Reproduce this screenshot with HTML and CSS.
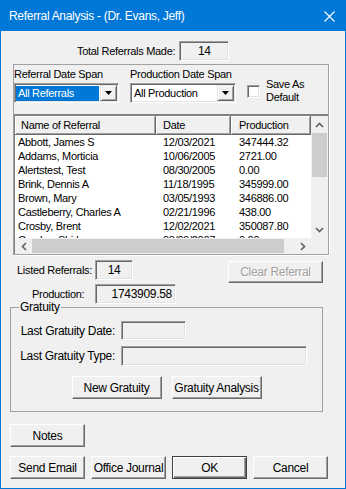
FILE: index.html
```html
<!DOCTYPE html>
<html lang="en">
<head>
  <meta charset="UTF-8">
  <title>Referral Analysis</title>
  <link rel="stylesheet" href="styles.css">
</head>
<body>

<div class="window">
  <div class="titlebar">
    <span>Referral Analysis - (Dr. Evans, Jeff)</span>
    <svg class="close" width="11" height="11" viewBox="0 0 11 11">
      <path d="M0.5 0.5 L10.5 10.5 M10.5 0.5 L0.5 10.5" stroke="#fff" stroke-width="1.1" fill="none"/>
    </svg>
  </div>

  <div class="content">
    <div class="total-row">
      <span>Total Referrals Made:</span>
      <div class="field total">14</div>
    </div>

    <div class="panel">
      <div class="spans">
        <div class="span-col">
          <div class="span-label">Referral Date Span</div>
          <div class="combo">
            <div class="combo-text selected">All Referrals</div>
            <div class="combo-btn">
              <svg width="7" height="4" viewBox="0 0 7 4"><path d="M0 0 H7 L3.5 4 Z" fill="#000"/></svg>
            </div>
          </div>
        </div>
        <div class="span-col wide">
          <div class="span-label">Production Date Span</div>
          <div class="combo">
            <div class="combo-text">All Production</div>
            <div class="combo-btn">
              <svg width="7" height="4" viewBox="0 0 7 4"><path d="M0 0 H7 L3.5 4 Z" fill="#000"/></svg>
            </div>
          </div>
        </div>
        <div class="save">
          <div class="checkbox"></div>
          <div class="save-label">Save As<br>Default</div>
        </div>
      </div>

      <div class="list">
        <div class="list-body">
          <div class="list-main">
            <div class="list-head">
              <div class="c-name">Name of Referral</div>
              <div class="c-date">Date</div>
              <div class="c-prod">Production</div>
            </div>
            <div class="list-rows">
              <div class="row"><div class="c-name">Abbott, James S</div><div class="c-date">12/03/2021</div><div class="c-prod">347444.32</div></div>
              <div class="row"><div class="c-name">Addams, Morticia</div><div class="c-date">10/06/2005</div><div class="c-prod">2721.00</div></div>
              <div class="row"><div class="c-name">Alertstest, Test</div><div class="c-date">08/30/2005</div><div class="c-prod">0.00</div></div>
              <div class="row"><div class="c-name">Brink, Dennis A</div><div class="c-date">11/18/1995</div><div class="c-prod">345999.00</div></div>
              <div class="row"><div class="c-name">Brown, Mary</div><div class="c-date">03/05/1993</div><div class="c-prod">346886.00</div></div>
              <div class="row"><div class="c-name">Castleberry, Charles A</div><div class="c-date">02/21/1996</div><div class="c-prod">438.00</div></div>
              <div class="row"><div class="c-name">Crosby, Brent</div><div class="c-date">12/02/2021</div><div class="c-prod">350087.80</div></div>
              <div class="row"><div class="c-name">Crosley, Shirley</div><div class="c-date">08/09/2007</div><div class="c-prod">0.00</div></div>
            </div>
          </div>
          <div class="vscroll">
            <div class="sb-btn">
              <svg width="9" height="6" viewBox="0 0 9 6"><path d="M1 5 L4.5 1.5 L8 5" stroke="#606060" stroke-width="1.6" fill="none"/></svg>
            </div>
            <div class="vthumb"></div>
            <div class="sb-space"></div>
            <div class="sb-btn">
              <svg width="9" height="6" viewBox="0 0 9 6"><path d="M1 1 L4.5 4.5 L8 1" stroke="#606060" stroke-width="1.6" fill="none"/></svg>
            </div>
          </div>
        </div>
        <div class="hscroll-row">
          <div class="hscroll">
            <div class="sb-btn h">
              <svg width="6" height="9" viewBox="0 0 6 9"><path d="M5 1 L1.5 4.5 L5 8" stroke="#606060" stroke-width="1.6" fill="none"/></svg>
            </div>
            <div class="hthumb"></div>
            <div class="sb-space"></div>
            <div class="sb-btn h">
              <svg width="6" height="9" viewBox="0 0 6 9"><path d="M1 1 L4.5 4.5 L1 8" stroke="#606060" stroke-width="1.6" fill="none"/></svg>
            </div>
          </div>
          <div class="corner"></div>
        </div>
      </div>
    </div>

    <div class="listed-row">
      <div class="row-label">Listed Referrals:</div>
      <div class="field listed">14</div>
      <button class="btn clear" disabled>Clear Referral</button>
    </div>

    <div class="prod-row">
      <div class="row-label prod">Production:</div>
      <div class="field prod-value">1743909.58</div>
    </div>

    <fieldset class="gratuity">
      <legend>Gratuity</legend>
      <div class="g-row first">
        <div class="g-label">Last Gratuity Date:</div>
        <div class="field g-date"></div>
      </div>
      <div class="g-row">
        <div class="g-label">Last Gratuity Type:</div>
        <div class="field g-type"></div>
      </div>
      <div class="g-buttons">
        <button class="btn g-btn">New Gratuity</button>
        <button class="btn g-btn">Gratuity Analysis</button>
      </div>
    </fieldset>

    <div class="notes-row">
      <button class="btn">Notes</button>
    </div>

    <div class="bottom-row">
      <button class="btn">Send Email</button>
      <button class="btn">Office Journal</button>
      <button class="btn default">OK</button>
      <button class="btn">Cancel</button>
    </div>
  </div>
</div>

</body>
</html>
```

FILE: styles.css
```css
body {
  margin: 0;
  font-family: "Liberation Sans", Arial, sans-serif;
  font-size: 11px;
  letter-spacing: -0.3px;
  color: #000;
  background: #f0f0f0;
}

.window {
  width: 346px;
  height: 489px;
  box-sizing: border-box;
  border: 1px solid #0078d7;
  border-top: 0;
  background: #f0f0f0;
}

.titlebar {
  height: 31px;
  background: #0078d7;
  color: #fff;
  font-size: 12px;
  display: flex;
  align-items: center;
  justify-content: space-between;
  padding: 0 10px 0 8px;
}

.close {
  margin-top: 1px;
}

.content {
  padding: 10px 16px 0 9px;
}

/* sunken read-only boxes */
.field {
  box-sizing: border-box;
  height: 20px;
  border: 1px solid;
  border-color: #a0a0a0 #fff #fff #a0a0a0;
  box-shadow: inset 1px 1px #696969, inset -1px -1px #e3e3e3;
  background: #f0f0f0;
  display: flex;
  align-items: center;
}

.total-row {
  display: flex;
  align-items: center;
  gap: 4px;
  margin-left: 67px;
  height: 20px;
}

.field.total {
  width: 50px;
  justify-content: center;
  font-size: 12px;
}

.panel {
  margin: 3px 0 0 3px;
  border: 1px solid #a0a0a0;
  box-shadow: 1px 1px #fff;
  padding-top: 3px;
}

.spans {
  display: flex;
}

.span-col {
  width: 105px;
  margin-right: 11px;
}

.span-col.wide {
  width: 106px;
}

.span-label {
  line-height: 13px;
  height: 13px;
  margin-bottom: 2px;
}

.combo {
  display: flex;
  height: 20px;
  box-sizing: border-box;
  border: 1px solid;
  border-color: #a0a0a0 #fff #fff #a0a0a0;
  box-shadow: inset 1px 1px #696969, inset -1px -1px #e3e3e3;
  background: #fff;
  padding: 1px;
}

.combo-text {
  flex: 1;
  margin: 1px 1px 0 0;
  padding-left: 2px;
  line-height: 15px;
  height: 15px;
}

.combo-text.selected {
  background: #0078d7;
  color: #fff;
}

.combo-btn {
  width: 17px;
  box-sizing: border-box;
  background: #f0f0f0;
  border: 1px solid;
  border-color: #e3e3e3 #696969 #696969 #e3e3e3;
  box-shadow: inset 1px 1px #fff, inset -1px -1px #a0a0a0;
  display: flex;
  align-items: center;
  justify-content: center;
}

.save {
  display: flex;
  align-items: center;
  gap: 6px;
  margin: 10px 0 0 0;
  height: 26px;
}

.checkbox {
  width: 13px;
  height: 13px;
  box-sizing: border-box;
  border: 1px solid;
  border-color: #a0a0a0 #fff #fff #a0a0a0;
  box-shadow: inset 1px 1px #696969, inset -1px -1px #e3e3e3;
  background: #fff;
}

.save-label {
  line-height: 13px;
}

/* list view */
.list {
  margin-top: 10px;
  border-style: solid;
  border-width: 2px 0 0 1px;
  border-color: #828282;
  background: #fff;
}

.list-body {
  display: flex;
  height: 122px;
}

.list-main {
  width: 296px;
  flex: none;
  overflow: hidden;
}

.list-head,
.row {
  display: flex;
}

.c-name,
.c-date,
.c-prod {
  flex: none;
  box-sizing: border-box;
  white-space: nowrap;
  overflow: hidden;
}

.c-name {
  width: 141px;
  padding-left: 3px;
}

.c-date {
  width: 75px;
  padding-left: 7px;
}

.c-prod {
  width: 80px;
  padding-left: 8px;
}

.list-head div {
  height: 19px;
  line-height: 18px;
  background: #f0f0f0;
  border-right: 1px solid #696969;
  border-bottom: 1px solid #696969;
  box-shadow: inset 1px 1px #fff, inset -1px -1px #a0a0a0;
}

.list-head .c-name {
  padding-left: 6px;
}

.list-rows {
  height: 103px;
  overflow: hidden;
}

.row {
  line-height: 14px;
}

.vscroll {
  width: 17px;
  flex: none;
  background: #f0f0f0;
  display: flex;
  flex-direction: column;
}

.sb-btn {
  height: 17px;
  display: flex;
  align-items: center;
  justify-content: center;
  flex: none;
}

.sb-btn.h {
  width: 17px;
  height: auto;
}

.sb-space {
  flex: 1;
}

.vthumb {
  height: 44px;
  margin: 0 1px;
  background: #cdcdcd;
}

.hscroll-row {
  display: flex;
  height: 16px;
  background: #f0f0f0;
}

.hscroll {
  width: 296px;
  flex: none;
  display: flex;
}

.hthumb {
  width: 252px;
  margin: 1px 0;
  background: #cdcdcd;
}

.corner {
  width: 17px;
}

/* lower section */
.listed-row {
  display: flex;
  align-items: flex-start;
  margin-top: 5px;
}

.row-label {
  width: 85px;
  box-sizing: border-box;
  padding-left: 7px;
  line-height: 20px;
}

.row-label.prod {
  padding-left: 22px;
}

.field.listed {
  width: 38px;
  justify-content: center;
  font-size: 12px;
}

.prod-row {
  display: flex;
  margin-top: 1px;
}

.field.prod-value {
  width: 81px;
  justify-content: flex-end;
  padding-right: 3px;
  font-size: 12px;
}

.btn {
  font: inherit;
  letter-spacing: inherit;
  color: #000;
  width: 75px;
  height: 23px;
  padding: 0;
  background: #f0f0f0;
  border: 1px solid;
  border-color: #fff #696969 #696969 #fff;
  box-shadow: inset -1px -1px #a0a0a0;
  font-size: 12px;
}

.btn.clear {
  width: 95px;
  height: 22px;
  margin: 1px 6px 0 auto;
  color: #a0a0a0;
  text-shadow: 1px 1px #fff;
}

.gratuity {
  margin: -3px 6px 0 0;
  padding: 0 0 12px 0;
  border: 1px solid #a0a0a0;
  min-width: 0;
}

.gratuity legend {
  margin-left: 8px;
  padding: 0 1px;
  line-height: 13px;
  font-size: 12px;
}

.g-row {
  display: flex;
  align-items: center;
  gap: 6px;
  margin-top: 6px;
}

.g-row.first {
  margin-top: 7px;
}

.g-label {
  width: 104px;
  text-align: right;
  font-size: 12px;
}

.field.g-date {
  width: 65px;
  height: 19px;
}

.field.g-type {
  width: 186px;
}

.g-buttons {
  display: flex;
  justify-content: center;
  gap: 10px;
  margin-top: 10px;
}

.g-btn {
  width: 90px;
}

.notes-row {
  margin-top: 12px;
}

.bottom-row {
  display: flex;
  gap: 6px;
  margin-top: 9px;
}

.btn.default {
  border-color: #404040;
  box-shadow: inset 1px 1px #fff, inset -1px -1px #696969, inset -2px -2px #a0a0a0;
}
```
